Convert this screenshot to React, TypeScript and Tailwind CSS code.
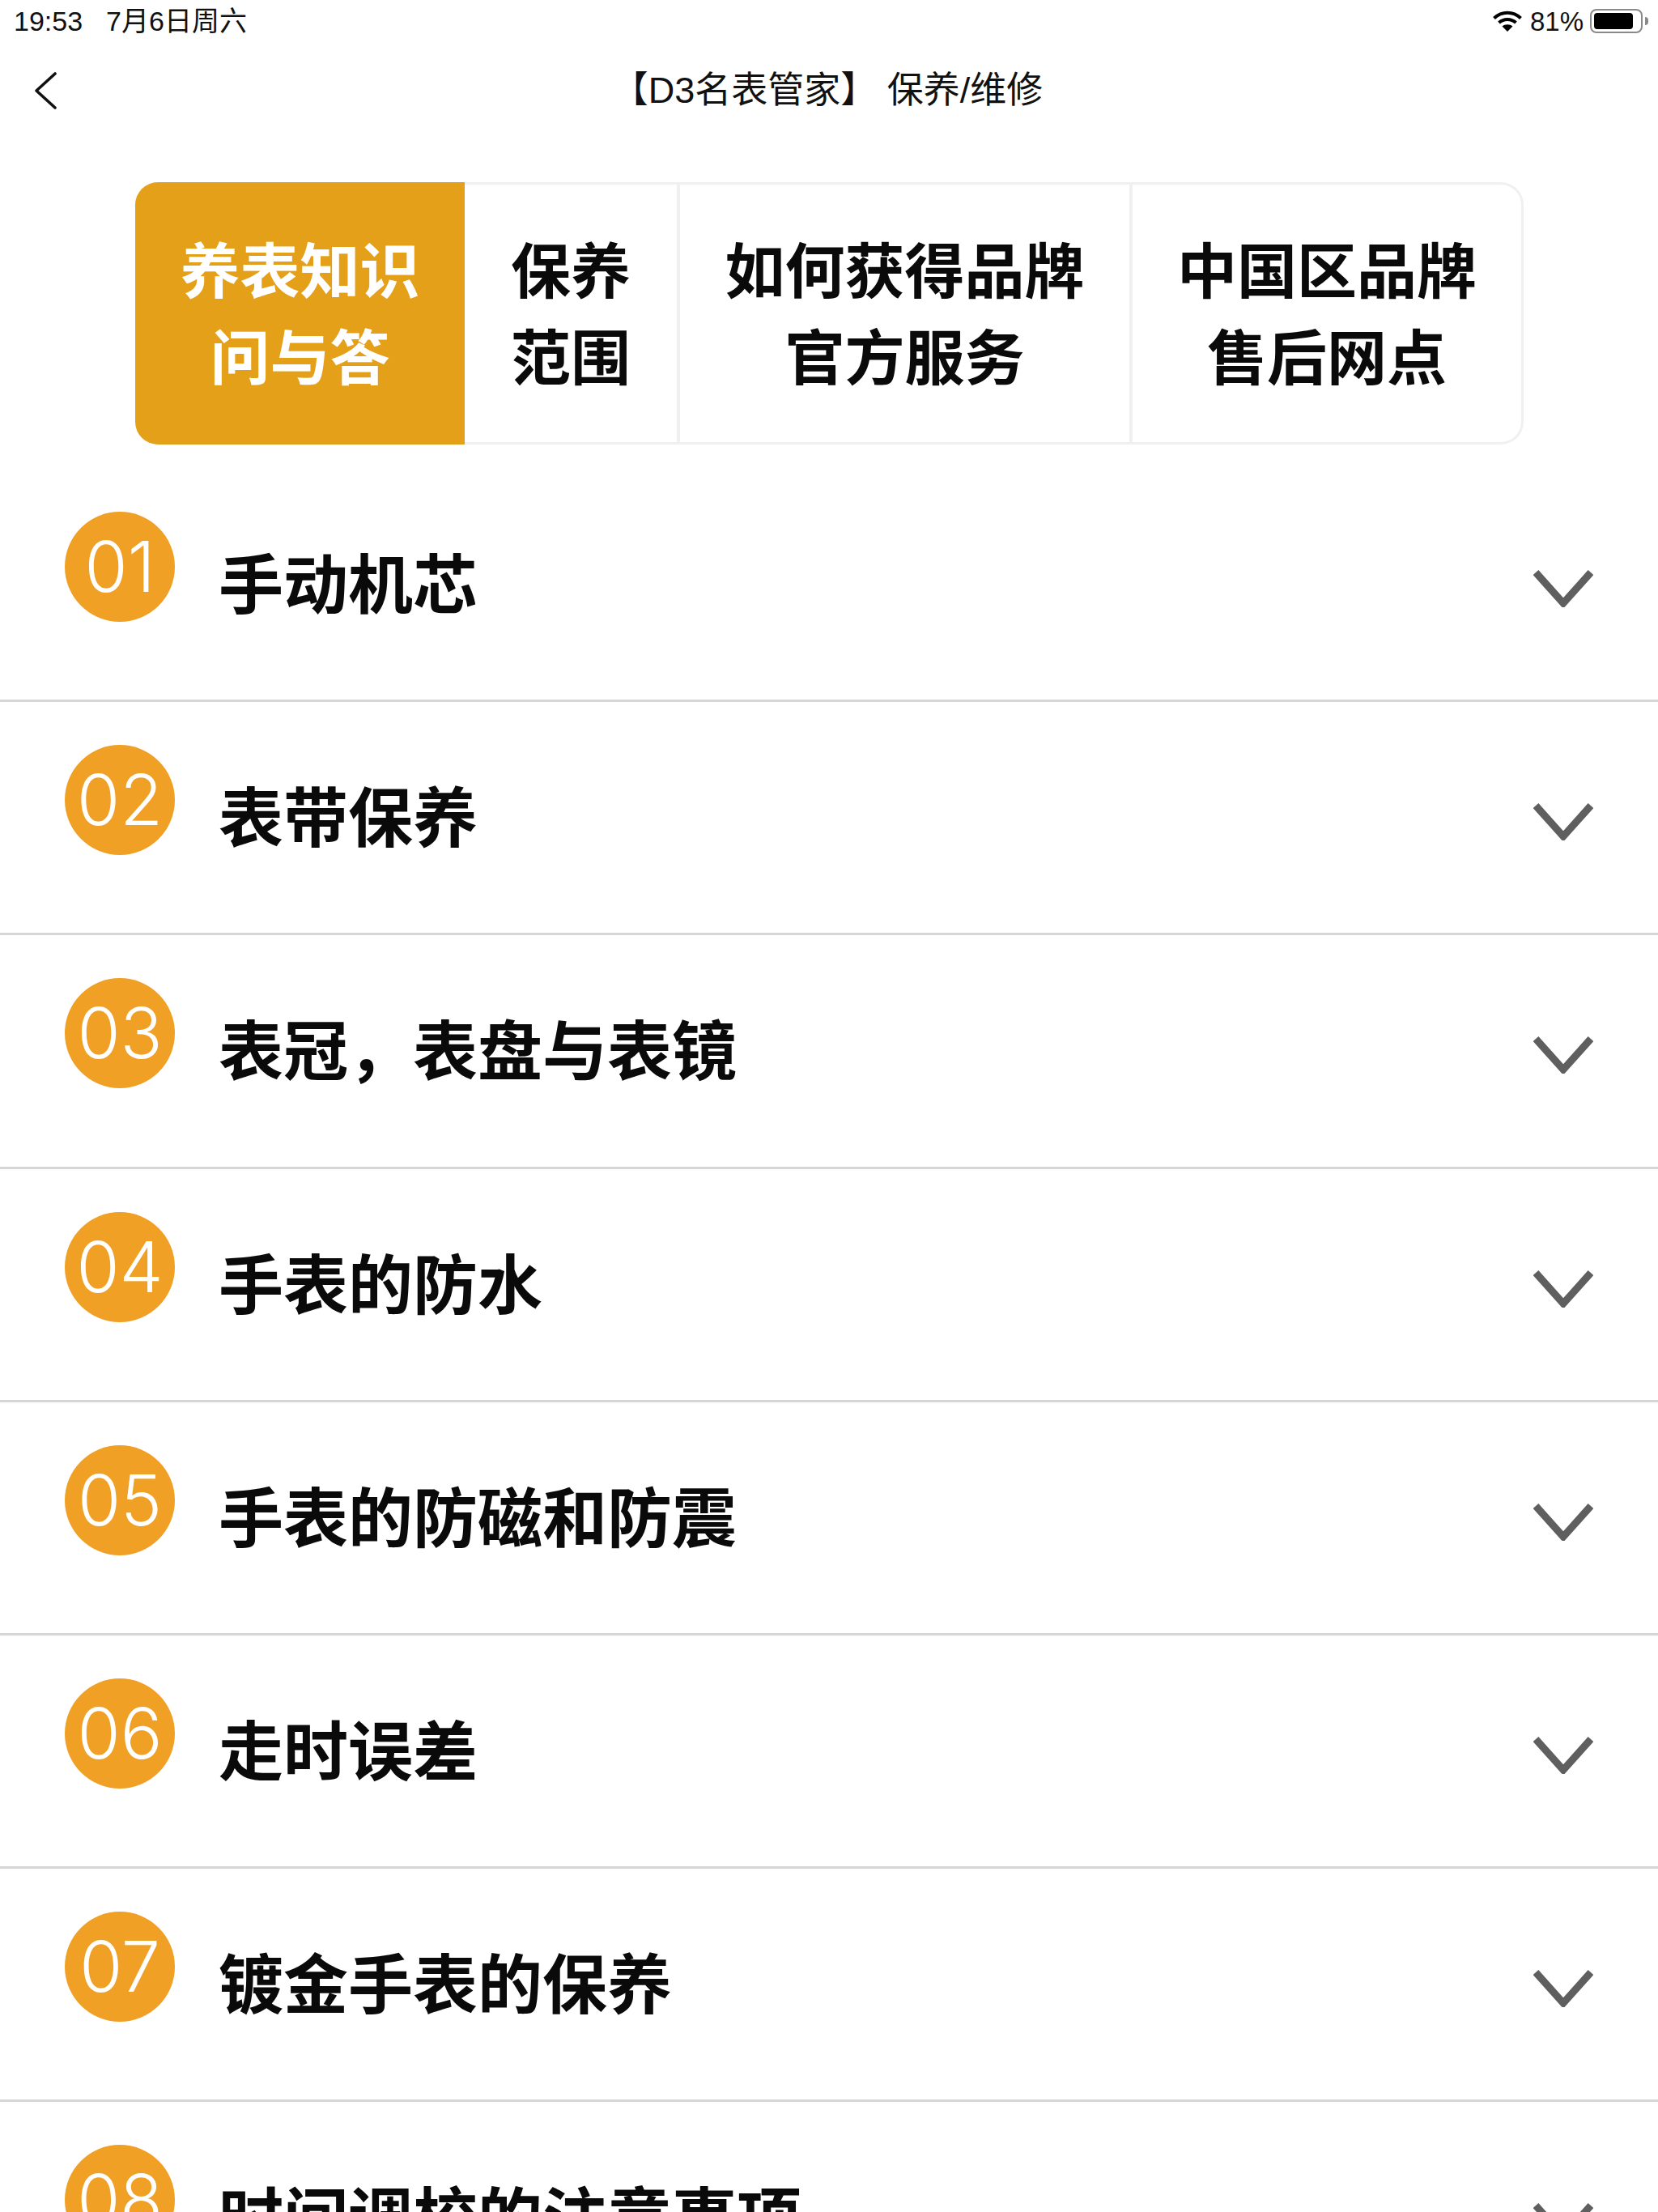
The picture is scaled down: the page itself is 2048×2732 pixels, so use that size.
import React from "react";

const cjk = "font-['Liberation_Sans','Noto_Sans_CJK_SC',sans-serif]";

const rows = [
  ["01", "手动机芯"],
  ["02", "表带保养"],
  ["03", "表冠，表盘与表镜"],
  ["04", "手表的防水"],
  ["05", "手表的防磁和防震"],
  ["06", "走时误差"],
  ["07", "镀金手表的保养"],
  ["08", "时间调校的注意事项"],
];

const tabs = [
  { w: "w-[407px] bg-[#e5a01a] text-white rounded-l-[28px]", a: "养表知识", b: "问与答" },
  { w: "w-[266px] text-[#0a0a0a] border-y-[3px] border-r-[4px] border-[#f0f0f0]", a: "保养", b: "范围" },
  { w: "w-[559px] text-[#0a0a0a] border-y-[3px] border-r-[4px] border-[#f0f0f0]", a: "如何获得品牌", b: "官方服务" },
  { w: "w-[483px] text-[#0a0a0a] border-y-[3px] border-r-[3px] border-[#f0f0f0] rounded-r-[28px]", a: "中国区品牌", b: "售后网点" },
];

function Row({ n, label }: { n: string; label: string }) {
  return (
    <div className="h-[288.2px] shrink-0 border-b-[3px] border-[#d6d6d6] flex items-start pl-[80px] pr-[80px]">
      <div className="mt-[53px] w-[136px] h-[136px] rounded-full bg-[#f0a024] flex items-center justify-center shrink-0 text-white text-[86px] leading-none font-light font-['Inter',sans-serif]">
        {n}
      </div>
      <div className="ml-[56px] -translate-x-[2px] mt-[72px] flex-1 text-[80px] leading-[130px] font-bold text-[#0a0a0a] font-['Noto_Sans_CJK_SC',sans-serif] whitespace-nowrap">
        {label}
      </div>
      <svg viewBox="0 0 74 46" className="mt-[125px] w-[74px] h-[46px] shrink-0" fill="none">
        <path d="M3 3 L37 41 L71 3" stroke="#5f5f5f" strokeWidth="9" />
      </svg>
    </div>
  );
}

export default function App() {
  return (
    <div className={`w-[2048px] h-[2732px] overflow-hidden bg-white flex flex-col ${cjk}`}>
      <div className="h-[52px] shrink-0 flex items-center pl-[17px] pr-[12px] text-[34px] leading-none text-[#111]">
        <span>19:53</span>
        <span className="ml-[29px]">7月6日周六</span>
        <div className="flex-1" />
        <svg viewBox="0 0 36 26" className="w-[36px] h-[26px]" fill="none" stroke="#000" strokeWidth="4">
          <path d="M1.5 9.5 C11 0.5 25 0.5 34.5 9.5" />
          <path d="M7.5 15 C13.5 9.5 22.5 9.5 28.5 15" />
          <path d="M18 26 L11.5 19.5 C15 16.5 21 16.5 24.5 19.5 Z" fill="#000" stroke="none" />
        </svg>
        <span className="ml-[10px] text-[33px]">81%</span>
        <div className="ml-[8px] w-[65px] h-[30px] rounded-[8px] border-[2px] border-[#8a8a8a] p-[3px]">
          <div className="w-[48px] h-full rounded-[4px] bg-black" />
        </div>
        <div className="ml-[3px] w-[4px] h-[10px] rounded-r-full bg-[#8a8a8a]" />
      </div>

      <div className="h-[120px] shrink-0 flex items-center pl-[42px]">
        <svg viewBox="0 0 28 46" className="w-[28px] h-[46px]" fill="none">
          <path d="M26 2 L3 23 L26 44" stroke="#111" strokeWidth="3.6" strokeLinecap="round" strokeLinejoin="round" />
        </svg>
        <div className="flex-1 text-center pr-[74px] text-[45px] leading-[60px] text-[#111]">
          【D3名表管家】 保养/维修
        </div>
      </div>

      <div className="h-[53px] shrink-0" />

      <div className="ml-[167px] w-[1715px] h-[324px] shrink-0 flex">
        {tabs.map((t) => (
          <div
            key={t.a}
            className={`${t.w} shrink-0 flex flex-col items-center justify-center pb-[8px] text-[74px] leading-[107px] font-bold font-['Noto_Sans_CJK_SC',sans-serif]`}
          >
            <span>{t.a}</span>
            <span>{t.b}</span>
          </div>
        ))}
      </div>

      <div className="flex flex-col mt-[30px] shrink-0">
        {rows.map(([n, l]) => (
          <Row key={n} n={n} label={l} />
        ))}
      </div>
    </div>
  );
}
